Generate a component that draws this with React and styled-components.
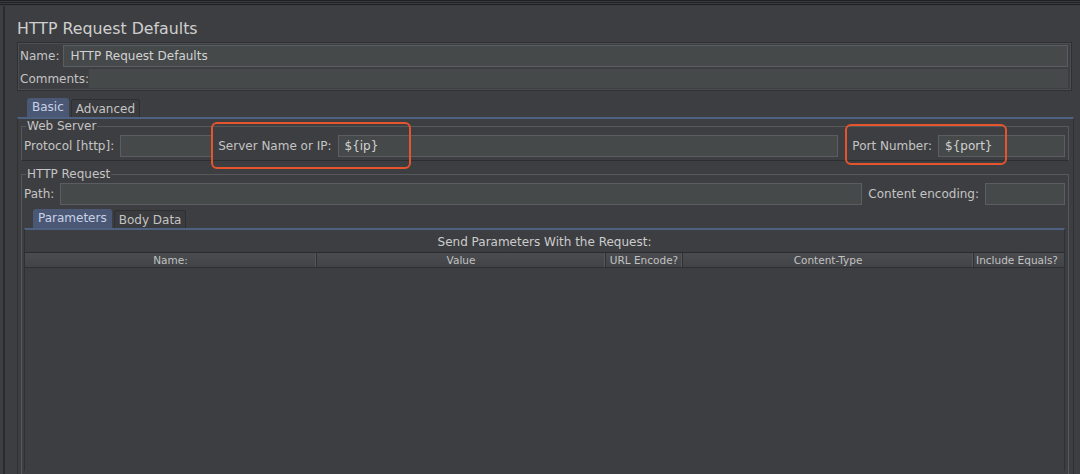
import React from "react";
import styled, { createGlobalStyle } from "styled-components";

const C = {
  bg: "#3d3e41",
  field: "#45494a",
  fieldBorder: "#5b5e61",
  line: "#56585b",
  dark: "#2a2b2d",
  text: "#c4c4c4",
  tab: "#4a5876",
  tabText: "#c9d2e4",
  blue: "#4f6180",
  orange: "#e5542b",
};

const GlobalStyle = createGlobalStyle`
  html, body { margin: 0; padding: 0; background: ${C.bg}; }
  body { font-family: "DejaVu Sans", "Liberation Sans", sans-serif; color: ${C.text}; }
`;

const columns = [
  { name: "Name:", width: 292 },
  { name: "Value", width: 289 },
  { name: "URL Encode?", width: 77 },
  { name: "Content-Type", width: 291 },
  { name: "Include Equals?", width: 86 },
];

const App = () => {
  return (
    <Page>
      <GlobalStyle />
      <TopStripes />
      <Frame>
        <Title>HTTP Request Defaults</Title>
        <NamePanel>
          <Row>
            <Label>Name:</Label>
            <Field>HTTP Request Defaults</Field>
          </Row>
          <Row $gap={0}>
            <Label>Comments:</Label>
            <Field $flat />
          </Row>
        </NamePanel>

        <TabBar $indent={10}>
          <Tab $active>Basic</Tab>
          <Tab>Advanced</Tab>
        </TabBar>
        <TabPanel>
          <Group>
            <Legend>Web Server</Legend>
            <Row $gap={6}>
              <Label>Protocol [http]:</Label>
              <Field $w={92} />
              <Label>Server Name or IP:</Label>
              <Field $grow>{"${ip}"}</Field>
              <Label $ml={8}>Port Number:</Label>
              <Field $w={127}>{"${port}"}</Field>
            </Row>
          </Group>

          <Group $grow $top={6}>
            <Legend>HTTP Request</Legend>
            <Row $gap={6}>
              <Label>Path:</Label>
              <Field $grow />
              <Label>Content encoding:</Label>
              <Field $w={80} />
            </Row>
            <TabBar $indent={9} $top={4}>
              <Tab $active>Parameters</Tab>
              <Tab>Body Data</Tab>
            </TabBar>
            <InnerPanel>
              <Caption>Send Parameters With the Request:</Caption>
              <TableHeader>
                {columns.map((col) => (
                  <HeadCell key={col.name} style={{ width: col.width }}>
                    {col.name}
                  </HeadCell>
                ))}
              </TableHeader>
              <TableBody />
            </InnerPanel>
          </Group>
        </TabPanel>
      </Frame>

      <Highlight $x={211} $y={122} $w={200} $h={47} />
      <Highlight $x={845} $y={124} $w={162} $h={41} />
    </Page>
  );
};

const Page = styled.div`
  position: relative;
  width: 1080px;
  height: 474px;
  overflow: hidden;
  background: ${C.bg};
  display: flex;
  flex-direction: column;
`;

const TopStripes = styled.div`
  height: 6px;
  flex-shrink: 0;
  background: repeating-linear-gradient(
    to bottom,
    #1f2022 0px,
    #1f2022 1px,
    #3a3b3e 1px,
    #3a3b3e 2px
  );
`;

const Frame = styled.div`
  flex: 1;
  display: flex;
  flex-direction: column;
  margin-left: 3px;
  border-left: 2px solid ${C.dark};
  padding: 0 6px 0 12px;
  min-height: 0;
`;

const Title = styled.div`
  font-size: 15.8px;
  height: 36px;
  line-height: 45px;
  color: #cfcfcf;
`;

const NamePanel = styled.div`
  border: 1px solid #2f3032;
  box-shadow: inset 0 0 0 1px #4c4e51;
  padding: 2px 3px 2px 2px;
  display: flex;
  flex-direction: column;
  gap: 2px;
  margin-right: 2px;
`;

const Row = styled.div`
  display: flex;
  align-items: center;
  gap: ${(p) => (p.$gap !== undefined ? p.$gap : 4)}px;
`;

const Label = styled.span`
  font-size: 12px;
  white-space: nowrap;
  margin-left: ${(p) => p.$ml || 0}px;
  color: ${C.text};
`;

const Field = styled.div`
  height: ${(p) => (p.$flat ? 19 : 22)}px;
  line-height: ${(p) => (p.$flat ? 19 : 21)}px;
  box-sizing: border-box;
  background: ${C.field};
  border: 1px solid ${(p) => (p.$flat ? C.field : C.fieldBorder)};
  padding: 0 6px;
  font-size: 12px;
  color: #d2d2d2;
  white-space: nowrap;
  overflow: hidden;
  flex: ${(p) => (p.$w ? `0 0 ${p.$w}px` : "1 1 0")};
`;

const TabBar = styled.div`
  display: flex;
  align-items: flex-end;
  gap: 2px;
  height: 19px;
  padding-left: ${(p) => p.$indent}px;
  margin-top: ${(p) => (p.$top !== undefined ? p.$top : 7)}px;
`;

const Tab = styled.div`
  font-size: 12px;
  padding: 0 4px;
  height: ${(p) => (p.$active ? 18 : 17)}px;
  line-height: ${(p) => (p.$active ? 16 : 19)}px;
  background: ${(p) => (p.$active ? C.tab : "#3a3b3e")};
  color: ${(p) => (p.$active ? C.tabText : C.text)};
  border: 1px solid ${(p) => (p.$active ? C.tab : "#2e2f31")};
  border-bottom: none;
  border-radius: 3px 3px 0 0;
`;

const TabPanel = styled.div`
  flex: 1;
  display: flex;
  flex-direction: column;
  border-top: 2px solid ${C.blue};
  border-left: 1px solid #2f3032;
  border-right: 1px solid #2f3032;
  padding: 0 4px 0 3px;
  min-height: 0;
`;

const Group = styled.fieldset`
  margin: ${(p) => p.$top || 0}px 0 0 0;
  padding: 2px 3px 3px 2px;
  border: 1px solid ${C.line};
  border-bottom-color: #2d2e30;
  display: flex;
  flex-direction: column;
  min-width: 0;
  ${(p) => (p.$grow ? "flex: 1; min-height: 0; border-bottom: none;" : "")}
`;

const Legend = styled.legend`
  font-size: 12px;
  padding: 0 1px;
  margin-left: 2px;
  color: ${C.text};
`;

const InnerPanel = styled.div`
  flex: 1;
  display: flex;
  flex-direction: column;
  border-top: 2px solid ${C.blue};
  border-left: 1px solid #2f3032;
  border-right: 1px solid #2f3032;
  min-height: 0;
`;

const Caption = styled.div`
  text-align: center;
  font-size: 12px;
  height: 22px;
  line-height: 24px;
  color: #cccccc;
`;

const TableHeader = styled.div`
  display: flex;
  height: 14px;
  border-top: 1px solid #2a2b2d;
  border-bottom: 1px solid #2e2f31;
  background: linear-gradient(to bottom, #4a4c50, #414346);
`;

const HeadCell = styled.div`
  box-sizing: border-box;
  font-size: 10.5px;
  line-height: 14px;
  text-align: center;
  color: #c2c2c2;
  border-right: 1px solid #2f3033;
  box-shadow: inset -1px 0 0 #55575a;
  white-space: nowrap;
  overflow: hidden;
  &:last-child {
    border-right: none;
    box-shadow: none;
  }
`;

const TableBody = styled.div`
  flex: 1;
  background: ${C.bg};
`;

const Highlight = styled.div`
  position: absolute;
  left: ${(p) => p.$x}px;
  top: ${(p) => p.$y}px;
  width: ${(p) => p.$w}px;
  height: ${(p) => p.$h}px;
  box-sizing: border-box;
  border: 2px solid ${C.orange};
  border-radius: 6px;
  pointer-events: none;
`;

export default App;
